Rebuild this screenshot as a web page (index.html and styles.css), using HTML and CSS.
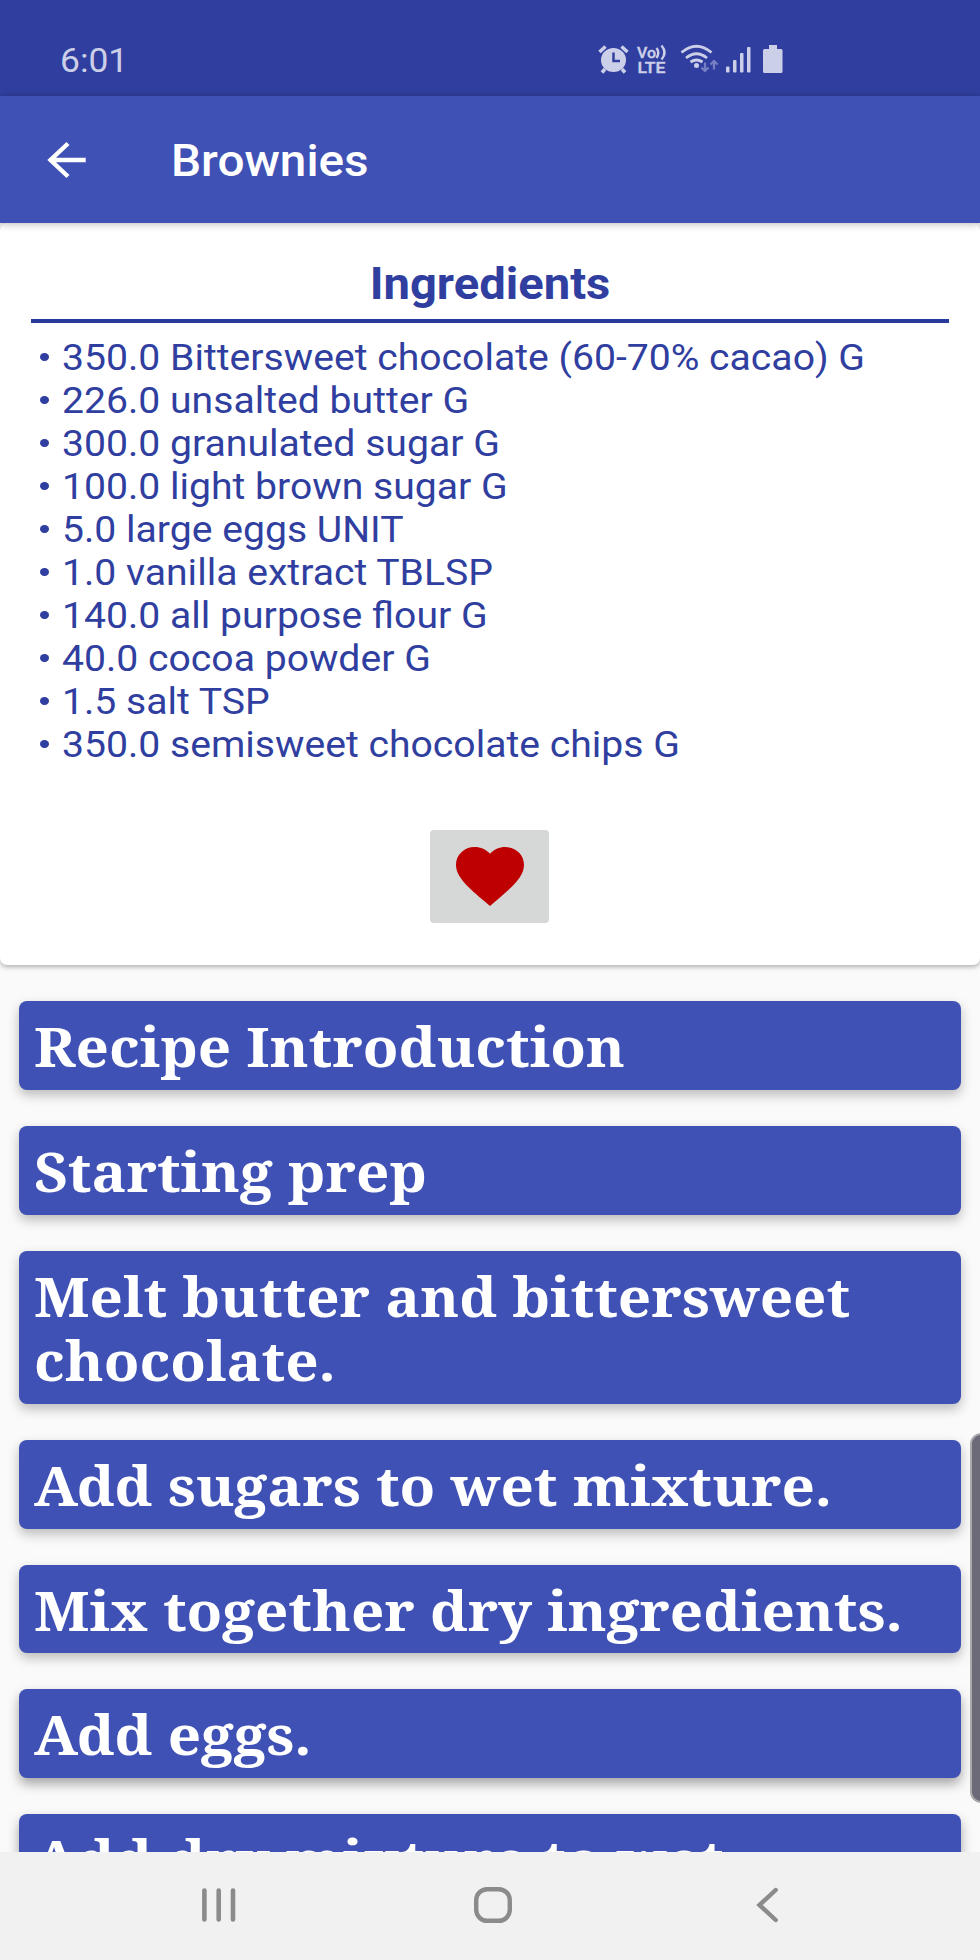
FILE: index.html
```html
<!DOCTYPE html>
<html lang="en">
<head>
<meta charset="utf-8">
<title>Brownies</title>
<link rel="stylesheet" href="styles.css">
</head>
<body>
<div class="screen">
  <div class="status">
    <span class="clock wide">6:01</span>
    <svg class="status-icons" width="200" height="40" viewBox="590 40 200 40" fill="#cccfe8">
      <ellipse cx="613.500" cy="60" rx="12.500" ry="12"/>
      <path d="M599.500 52l6-5.500M627.500 52l-6-5.500M605 69l-3 3.500M622 69l3 3.500" stroke="#cccfe8" stroke-width="3.500" fill="none"/>
      <path d="M613.500 52.500v8.500h6.500" stroke="#303f9f" stroke-width="2.500" fill="none"/>
      <text class="volte" x="637" y="57.500" textLength="19" lengthAdjust="spacingAndGlyphs">Vo</text>
      <path d="M656.500 48q3.500 4.500 0 10M661.500 45.500q6 7 0 14" stroke="#cccfe8" stroke-width="2.400" fill="none"/>
      <text class="volte" x="637.500" y="72.500" textLength="28" lengthAdjust="spacingAndGlyphs">LTE</text>
      <path d="M681.500 52.500q15-12.500 30 0M686 58q10.500-8.500 21 0M690.500 62q6-4 12 0" stroke="#cccfe8" stroke-width="2.800" fill="none"/>
      <circle cx="696.500" cy="65.500" r="2.500"/>
      <path d="M705 62.500v8.500m-3.500-3.500l3.500 3.500 3.500-3.500M714 69.500v-8.500m-3.500 3.500l3.500-3.500 3.500 3.500" stroke="#7780c4" stroke-width="2.200" fill="none"/>
      <rect x="726" y="66.500" width="3.500" height="6" rx="1"/>
      <rect x="733" y="60" width="3.500" height="12.500" rx="1"/>
      <rect x="740" y="53" width="3.500" height="19.500" rx="1"/>
      <rect x="747" y="47" width="3.500" height="25.500" rx="1"/>
      <path d="M769 45h8v4h4q1.500 0 1.500 1.500v21q0 1.500-1.500 1.500h-16.500q-1.500 0-1.500-1.500v-21q0-1.500 1.500-1.500h4.500z"/>
    </svg>
  </div>
  <header class="appbar">
    <svg class="back" width="40" height="38" viewBox="0 0 40 38" fill="none" stroke="#fff" stroke-width="4.400"><path d="M38.700 19H4M21 2.500L3.500 19 21 35.500"/></svg>
    <h1 class="title wide">Brownies</h1>
  </header>
  <main class="content">
    <section class="card">
      <h2 class="card-title"><span class="wide-center">Ingredients</span></h2>
      <ul class="ingredients">
        <li><span class="wide">350.0 Bittersweet chocolate (60-70% cacao) G</span></li>
        <li><span class="wide">226.0 unsalted butter G</span></li>
        <li><span class="wide">300.0 granulated sugar G</span></li>
        <li><span class="wide">100.0 light brown sugar G</span></li>
        <li><span class="wide">5.0 large eggs UNIT</span></li>
        <li><span class="wide">1.0 vanilla extract TBLSP</span></li>
        <li><span class="wide">140.0 all purpose flour G</span></li>
        <li><span class="wide">40.0 cocoa powder G</span></li>
        <li><span class="wide">1.5 salt TSP</span></li>
        <li><span class="wide">350.0 semisweet chocolate chips G</span></li>
      </ul>
      <div class="favorite">
        <svg width="68" height="59" viewBox="2 3 20 18.350" preserveAspectRatio="none" fill="#bf0000"><path d="M12 21.350l-1.450-1.320C5.400 15.360 2 12.280 2 8.500 2 5.420 4.420 3 7.500 3c1.740 0 3.410.810 4.500 2.090C13.090 3.810 14.760 3 16.500 3 19.580 3 22 5.420 22 8.500c0 3.780-3.400 6.860-8.550 11.540L12 21.350z"/></svg>
      </div>
    </section>
    <div class="steps">
      <div class="step"><span class="wide">Recipe Introduction</span></div>
      <div class="step"><span class="wide">Starting prep</span></div>
      <div class="step"><span class="wide">Melt butter and bittersweet<br>chocolate.</span></div>
      <div class="step"><span class="wide">Add sugars to wet mixture.</span></div>
      <div class="step"><span class="wide">Mix together dry ingredients.</span></div>
      <div class="step deep"><span class="wide">Add eggs.</span></div>
      <div class="step deep"><span class="wide">Add dry mixture to wet</span></div>
    </div>
    <div class="edge-handle"></div>
  </main>
  <nav class="navbar">
    <svg width="36" height="36" viewBox="0 0 36 36" stroke="#8b8b8b" stroke-width="4.600" stroke-linecap="round"><path d="M3.400 3.500v29M17.700 3.500v29M32 3.500v29"/></svg>
    <svg class="home" width="40" height="38" viewBox="0 0 40 38" fill="none" stroke="#8b8b8b" stroke-width="4.400"><rect x="3.200" y="3.200" width="33.600" height="31.600" rx="11"/></svg>
    <svg class="prev" width="24" height="36" viewBox="0 0 24 36" fill="none" stroke="#8b8b8b" stroke-width="4.400" stroke-linecap="round"><path d="M20.700 3L4.500 18l16.200 15"/></svg>
  </nav>
</div>
</body>
</html>
```
FILE: styles.css
```css
* { box-sizing: border-box; }
body { margin: 0; font-family: Roboto, sans-serif; }
.screen { width: 980px; height: 1960px; display: flex; flex-direction: column; overflow: hidden; background: #fafafa; }
.wide { display: block; width: max-content; transform: scaleX(1.0557); transform-origin: 0 50%; }
.wide-center { display: inline-block; transform: scaleX(1.0557); }
.status { flex: none; height: 96px; padding: 24px 190px 0 60px; display: flex; align-items: center; justify-content: space-between; background: #303f9f; }
.clock { margin-top: 2px; font-size: 33.500px; line-height: 40px; color: #cccfe8; }
.status-icons { flex: none; }
.volte { font: 500 15.500px Roboto, sans-serif; stroke: #cccfe8; stroke-width: .4px; }
.appbar { flex: none; height: 127px; padding-left: 47px; display: flex; align-items: center; background: #3f51b5; box-shadow: 0 1px 8px rgba(0,0,0,.28); position: relative; z-index: 1; }
.back { flex: none; }
.title { margin: 3px 0 0 84px; font-size: 45.200px; line-height: 54px; font-weight: 500; color: #fff; }
.content { flex: 1; min-height: 0; overflow: hidden; position: relative; }
.card { height: 742px; padding: 33px 31px 0; border-radius: 7px; background: #fff; box-shadow: 0 2px 5px rgba(0,0,0,.3); display: flex; flex-direction: column; }
.card-title { margin: 0; height: 67px; padding-top: 1px; border-bottom: 4px solid #283a9c; text-align: center; font-size: 44.700px; line-height: 54px; font-weight: 700; color: #303f9f; }
.ingredients { list-style: none; margin: 12.500px 0 0; padding: 0 0 0 30.500px; font-size: 37.100px; line-height: 43px; color: #303f9f; }
.ingredients li { height: 43px; white-space: nowrap; display: flex; align-items: center; }
.ingredients li::before { content: ""; width: 8.500px; height: 8px; border-radius: 50%; background: #303f9f; margin: 0 13px 1px -21.500px; }
.favorite { width: 119px; height: 93px; margin: 64.500px 0 0 399px; border-radius: 4px; background: #d6d7d7; display: flex; padding: 17px 0 0 25.500px; }
.steps { display: flex; flex-direction: column; gap: 36px; padding: 36.200px 19px 0; }
.step { flex: none; padding: 13px 14.500px 11.250px; border-radius: 8px; background: #3f51b5; color: #fff; font: 700 55.250px/64.500px "Noto Serif", "DejaVu Serif", serif; white-space: nowrap; box-shadow: 0 5px 12px rgba(0,0,0,.26); }
.step.deep { box-shadow: 0 6px 12px rgba(0,0,0,.34); }
.edge-handle { position: absolute; right: -12px; top: 1210px; width: 22px; height: 370px; border-radius: 11px; background: #6c6a78; border: 2px solid #aaa; }
.navbar { flex: none; height: 108px; padding: 0 0 2px 201px; display: flex; align-items: center; background: #f1f1f1; }
.home { margin-left: 236px; }
.prev { margin-left: 242px; }
```
